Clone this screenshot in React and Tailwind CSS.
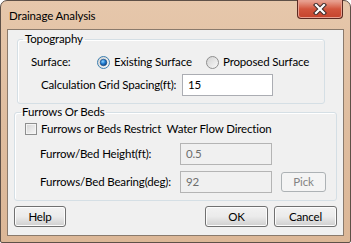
import React from 'react'

const font = { fontFamily: 'Lato, "Noto Sans", sans-serif' }

function Radio({ checked }) {
  return (
    <svg width="13" height="13" viewBox="0 0 13 13" className="shrink-0">
      <defs>
        <linearGradient id={checked ? 'rg1' : 'rg0'} x1="0" y1="0" x2="1" y2="1">
          <stop offset="0" stopColor="#d0d0d0" />
          <stop offset="1" stopColor="#fbfbfb" />
        </linearGradient>
        <radialGradient id="dot" cx="0.4" cy="0.35" r="0.7">
          <stop offset="0" stopColor="#8fd3ff" />
          <stop offset="0.5" stopColor="#1f7bd1" />
          <stop offset="1" stopColor="#0d3f7a" />
        </radialGradient>
      </defs>
      <circle cx="6.5" cy="6.5" r="6" fill={`url(#${checked ? 'rg1' : 'rg0'})`} stroke={checked ? '#3c7fb1' : '#8f8f8f'} />
      {checked && <circle cx="6.5" cy="6.5" r="3.3" fill="url(#dot)" stroke="#16467e" strokeWidth="0.6" />}
    </svg>
  )
}

function Btn({ children, className = '', disabled }) {
  return (
    <div
      className={
        'flex items-center justify-center rounded-[3px] border ' +
        (disabled
          ? 'border-[#adb2b5] bg-[#f4f4f4] text-[#838383] '
          : 'border-[#707070] bg-gradient-to-b from-[#f2f2f2] via-[#ebebeb] to-[#cfcfcf] text-black shadow-[inset_0_0_0_1px_#fcfcfc] ') +
        className
      }
    >
      {children}
    </div>
  )
}

export default function App() {
  return (
    <div style={font} className="w-[351px] h-[243px] overflow-hidden whitespace-nowrap text-[11.5px] tracking-[-0.15px]">
      <div className="w-[351px] h-[243px] flex flex-col rounded-t-[7px] rounded-b-[2px] border border-[#5e5047] bg-gradient-to-b from-[#e6c7ab] via-[#dfbd9f] to-[#dcb797] px-[6px] pb-[6px]">
        {/* title bar */}
        <div className="h-[28px] flex items-start justify-between">
          <span className="mt-[7px] ml-[2px] leading-[16px] text-black">Drainage Analysis</span>
          <div className="-mt-px mr-px w-[46px] h-[19px] rounded-b-[4px] border border-[#5b2a22] border-t-0 bg-gradient-to-b from-[#e9a99a] via-[#d2553d] to-[#c4432c] flex items-center justify-center shadow-[inset_0_0_0_1px_#e8a090]">
            <svg width="14" height="12" viewBox="0 0 14 12">
              <path d="M3 2 L11 10 M11 2 L3 10" stroke="#3d2a2a" strokeWidth="4.2" strokeLinecap="square" />
              <path d="M3 2 L11 10 M11 2 L3 10" stroke="#ffffff" strokeWidth="2.2" strokeLinecap="square" />
            </svg>
          </div>
        </div>
        {/* client */}
        <div className="flex-1 border border-[#8a7a6c] bg-[#f0f0f0] flex flex-col text-black">
          <fieldset className="ml-[9px] mr-[18px] mt-px h-[73px] rounded-[3px] border border-[#d5dfe5] shadow-[inset_1px_1px_0_#fff] px-0">
            <legend className="ml-[5px] px-[2px] leading-[16px]">Topography</legend>
            <div className="flex items-center h-[16px] mt-[7px]">
              <span className="ml-[13px] w-[66px]">Surface:</span>
              <Radio checked />
              <span className="ml-[4px] w-[92px]">Existing Surface</span>
              <Radio />
              <span className="ml-[4px]">Proposed Surface</span>
            </div>
            <div className="flex items-center h-[22px] mt-[4px]">
              <span className="ml-[23px] w-[141px]">Calculation Grid Spacing(ft):</span>
              <div className="w-[91px] h-[22px] border border-[#abadb3] bg-white flex items-center pl-[5px]">15</div>
            </div>
          </fieldset>
          <fieldset className="ml-[6px] mr-[6px] h-[97px] rounded-[3px] border border-[#d5dfe5] shadow-[inset_1px_1px_0_#fff] px-0">
            <legend className="ml-[6px] px-[1px] leading-[16px]">Furrows Or Beds</legend>
            <div className="flex items-center h-[16px] mt-px">
              <div className="ml-[10px] w-[12px] h-[12px] border border-[#8e8f8f] bg-gradient-to-br from-[#d5d5d5] to-[#f7f7f7] shadow-[inset_0_0_0_1px_#f4f4f4]" />
              <span className="ml-[4px]">Furrows or Beds Restrict&nbsp; Water Flow Direction</span>
            </div>
            <div className="flex items-center h-[22px] mt-[6px]">
              <span className="ml-[25px] w-[140px]">Furrow/Bed Height(ft):</span>
              <div className="w-[92px] h-[22px] border border-[#b4b4b4] bg-[#f0f0f0] text-[#6d6d6d] flex items-center pl-[5px]">0.5</div>
            </div>
            <div className="flex items-center h-[22px] mt-[6px]">
              <span className="ml-[25px] w-[140px]">Furrows/Bed Bearing(deg):</span>
              <div className="w-[92px] h-[22px] border border-[#b4b4b4] bg-[#f0f0f0] text-[#6d6d6d] flex items-center pl-[5px]">92</div>
              <Btn disabled className="ml-[9px] w-[45px] h-[20px]">Pick</Btn>
            </div>
          </fieldset>
          <div className="flex items-center mt-[5px] px-[6px]">
            <Btn className="w-[52px] h-[21px]">Help</Btn>
            <div className="flex-1" />
            <Btn className="w-[63px] h-[21px]">OK</Btn>
            <Btn className="ml-[6px] w-[63px] h-[21px]">Cancel</Btn>
          </div>
        </div>
      </div>
    </div>
  )
}
